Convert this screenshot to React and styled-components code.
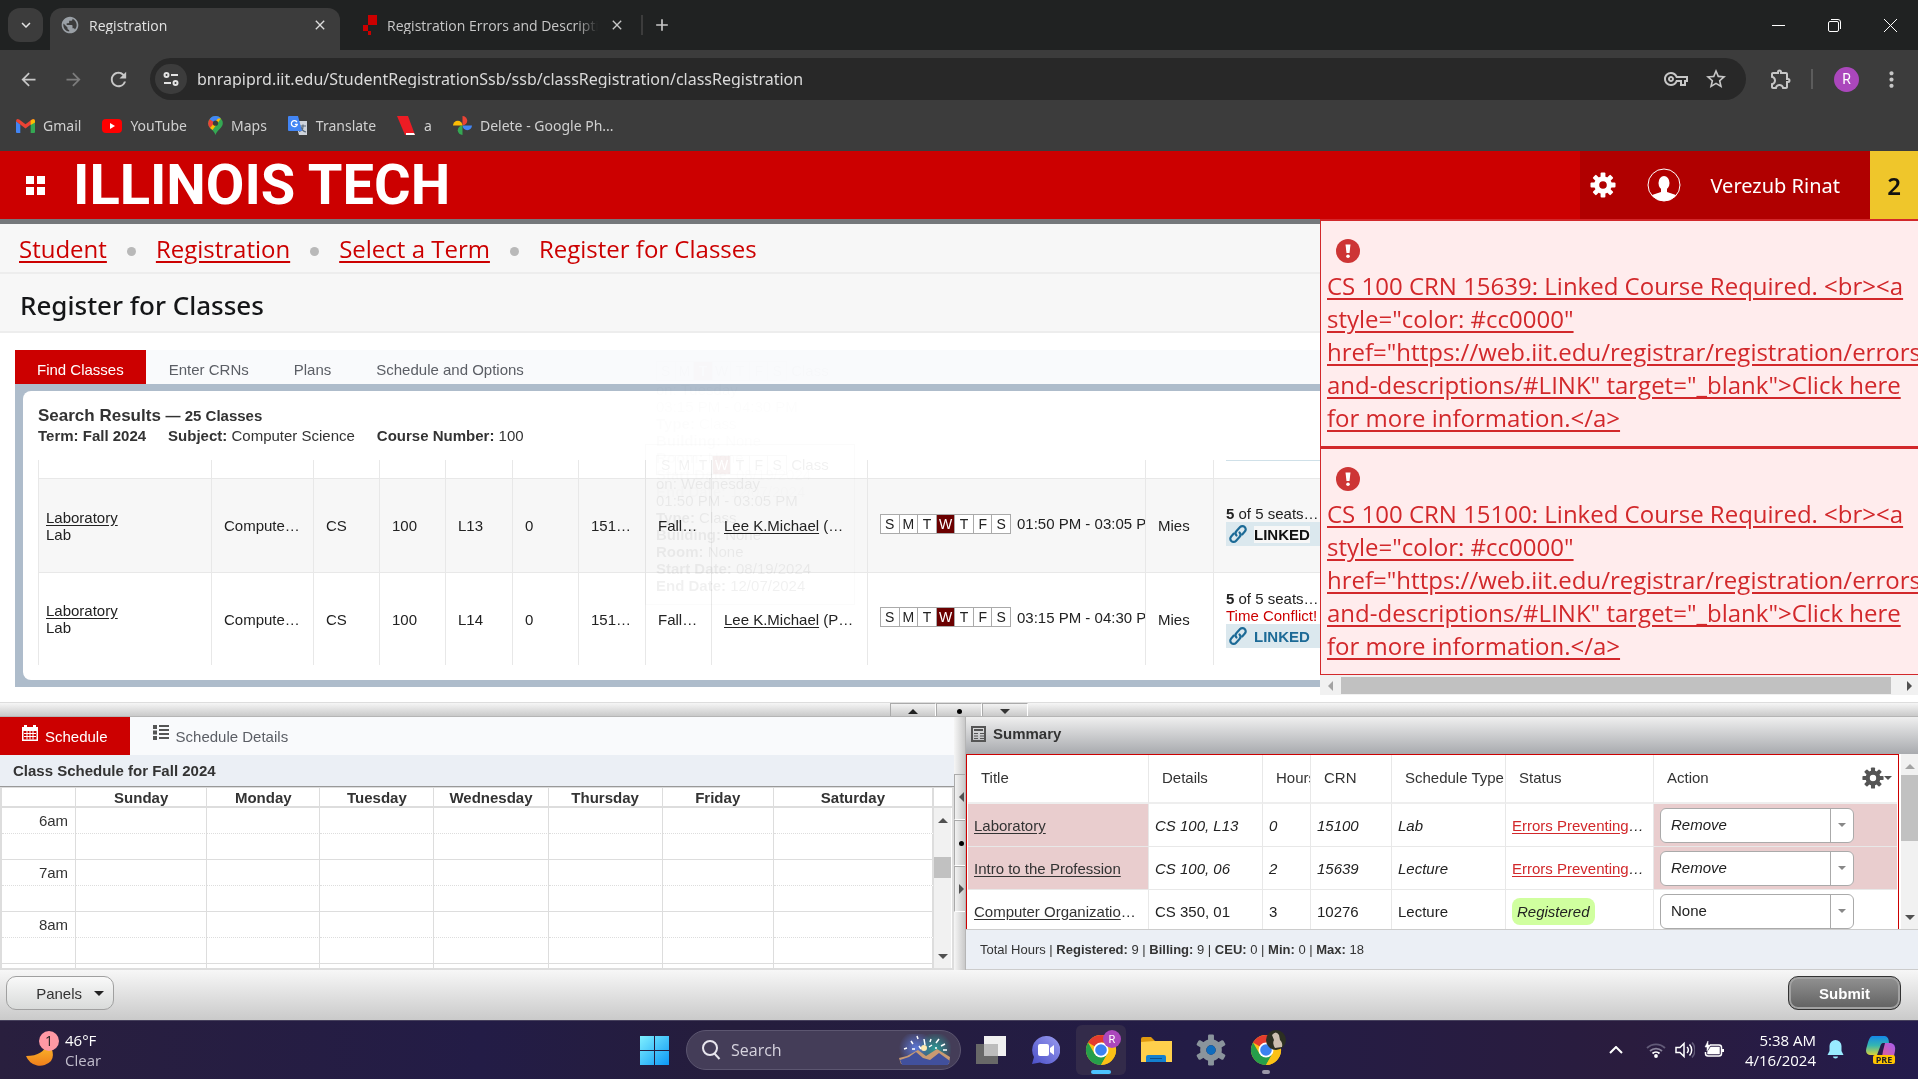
import React from "react";
import styled, { createGlobalStyle, css } from "styled-components";
import {
  MdAdd,
  MdArrowBack,
  MdArrowForward,
  MdClose,
  MdKeyboardArrowDown,
  MdMoreVert,
  MdOutlineExtension,
  MdOutlineVpnKey,
  MdPublic,
  MdRefresh,
  MdStarOutline,
} from "react-icons/md";

const ui = '"Noto Sans", "Open Sans", sans-serif';
const arial = '"Liberation Sans", Arial, sans-serif';
const noto = '"Noto Sans", "Open Sans", sans-serif';
const open = '"Open Sans", "Noto Sans", sans-serif';
const red = "#cc0000";

const GlobalStyle = createGlobalStyle`
  * { box-sizing: border-box; }
  body { margin: 0; font-family: ${arial}; font-size: 15px; line-height: 17px; color: #333; background: #fff; }
  button, input, select { font: inherit; color: inherit; margin: 0; padding: 0; border: 0; background: none; }
  h1, h2, h3, p, ol { margin: 0; padding: 0; font-size: inherit; font-weight: inherit; list-style: none; }
  svg { display: block; flex: none; }
`;

const Screen = styled.div`
  display: flex;
  flex-direction: column;
  min-height: 100vh;
  overflow: hidden;
`;

/* ---------- Browser frame ---------- */

const TabStrip = styled.div`
  display: flex;
  align-items: center;
  height: 50px;
  padding-left: 8px;
  background: #202222;
  color: #e3e3e3;
  font-family: ${open};
  font-size: 14px;
`;
const TabSearch = styled.button`
  display: grid;
  place-items: center;
  width: 35px;
  height: 34px;
  margin-right: 7px;
  border-radius: 12px;
  background: #3c3c3c;
`;
const BrowserTab = styled.div`
  display: flex;
  align-items: center;
  align-self: flex-end;
  height: 42px;
  width: ${(p) => p.$width}px;
  padding: ${(p) => (p.$active ? "0 10px 8px" : "0 10px 8px 22px")};
  gap: 9px;
  border-radius: 12px 12px 0 0;
  background: ${(p) => (p.$active ? "#3c3c3c" : "transparent")};
  color: ${(p) => (p.$active ? "#e3e3e3" : "#c7c7c7")};
`;
const Globe = styled(MdPublic)`
  color: #9aa0a6;
`;
const TabLabel = styled.span`
  flex: 1;
  overflow: hidden;
  white-space: nowrap;
  mask-image: linear-gradient(90deg, #000 90%, transparent);
`;
const StripRule = styled.span`
  width: 2px;
  height: 20px;
  margin: 0 7px 0 4px;
  background: #3c3c3c;
`;
const IconButton = styled.button`
  display: grid;
  place-items: center;
  width: ${(p) => p.$w || 24}px;
  height: 24px;
  color: ${(p) => p.$color || "#c7c7c7"};
`;
const WindowButtons = styled.div`
  display: flex;
  margin-left: auto;
`;
const Toolbar = styled.div`
  display: flex;
  align-items: center;
  height: 58px;
  padding: 0 11px 0 8px;
  background: #3c3c3c;
`;
const NavButtons = styled.div`
  display: flex;
  gap: 5px;
  margin-right: 12px;
`;
const AddressBar = styled.label`
  display: flex;
  align-items: center;
  flex: 1;
  height: 42px;
  padding: 0 18px 0 5px;
  gap: 10px;
  border-radius: 21px;
  background: #282828;
  font-family: ${ui};
  font-size: 16px;
  color: #dadada;
`;
const SiteInfo = styled.span`
  display: grid;
  place-items: center;
  width: 32px;
  height: 30px;
  border-radius: 16px;
  background: #3c3c3c;
`;
const AddressInput = styled.input`
  flex: 1;
  min-width: 0;
  outline: 0;
`;
const AddressIcons = styled.span`
  display: flex;
  gap: 16px;
  color: #c7c7c7;
`;
const ToolbarEnd = styled.div`
  display: flex;
  align-items: center;
  gap: 10px;
  margin-left: 15px;
`;
const ToolbarRule = styled.span`
  width: 2px;
  height: 20px;
  background: #5c5c5c;
`;
const Profile = styled.button`
  width: 25px;
  height: 25px;
  margin: 0 6px 0 11px;
  border-radius: 50%;
  background: #ab47bc;
  color: #fff;
  font-family: Roboto, sans-serif;
  font-size: 14px;
`;
const Bookmarks = styled.nav`
  display: flex;
  align-items: center;
  height: 43px;
  padding: 0 16px 8px;
  gap: 21px;
  background: #3c3c3c;
  font-family: ${ui};
  font-size: 14px;
`;
const Bookmark = styled.a`
  display: flex;
  align-items: center;
  gap: 8px;
  color: #d0d0d0;
  text-decoration: none;
`;

/* ---------- Application header ---------- */

const Header = styled.header`
  display: flex;
  align-items: center;
  height: 68px;
  padding-left: 26px;
  background: ${red};
  color: #fff;
`;
const MenuButton = styled.button`
  display: grid;
  grid-template-columns: 8px 8px;
  gap: 3px;
  margin-right: 28px;
  span { height: 8px; background: #fff; }
`;
const Wordmark = styled.a`
  color: #fff;
  text-decoration: none;
  font-family: Roboto, "Liberation Sans", sans-serif;
  font-size: 56px;
  font-weight: 700;
  line-height: 68px;
  white-space: nowrap;
`;
const UserArea = styled.div`
  display: flex;
  align-items: center;
  height: 68px;
  margin-left: auto;
  padding: 0 30px 0 10px;
  background: #b00000;
  font-family: ${noto};
  font-size: 20px;
  button { display: flex; align-items: center; color: #fff; }
`;
const UserButton = styled.button`
  gap: 30px;
  margin-left: 31px;
`;
const AlertCount = styled.button`
  width: 48px;
  height: 68px;
  background: #efc62b;
  color: #111;
  font-family: ${noto};
  font-size: 24px;
  font-weight: 600;
`;
const Content = styled.main`
  position: relative;
  display: flex;
  flex-direction: column;
  border-top: 5px solid #75787b;
`;
const Crumbs = styled.ol`
  display: flex;
  align-items: center;
  height: 50px;
  padding-left: 19px;
  border-bottom: 2px solid #ededed;
  background: #f7f7f7;
  color: ${red};
  font-family: ${open};
  font-size: 24px;
  li { display: flex; align-items: center; }
  li + li::before { content: ""; width: 9px; height: 9px; margin: 6px 20px 0; border-radius: 50%; background: #b9b9b9; }
  a { color: inherit; text-underline-offset: 3px; }
`;
const PageTitle = styled.h1`
  height: 59px;
  padding-left: 20px;
  border-bottom: 2px solid #ededed;
  background: #f7f7f7;
  color: #151618;
  font-family: ${noto};
  font-size: 26px;
  font-weight: 500;
  line-height: 62px;
`;
const Section = styled.section`
  margin: 17px 15px 15px;
`;
const Tabs = styled.div`
  display: flex;
  gap: 1px;
  background: #f9fafc;
`;
const Tab = styled.button`
  display: flex;
  align-items: ${(p) => (p.$tall ? "flex-start" : "center")};
  gap: 7px;
  height: ${(p) => (p.$tall ? 38 : 34)}px;
  padding: ${(p) => (p.$tall ? "8px 22px 0" : "4px 22px 0")};
  background: ${(p) => (p.$active ? red : "transparent")};
  color: ${(p) => (p.$active ? "#fff" : "#5b5e65")};
  span { padding-top: ${(p) => (p.$tall ? 3 : 0)}px; }
`;
const ResultsFrame = styled.div`
  padding: 7px 8px;
  background: #aebccb;
`;
const Results = styled.div`
  padding: 15px 15px;
  border-radius: 8px;
  background: #fff;
  line-height: 20px;
`;
const ResultsTitle = styled.h2`
  font-size: 17px;
  font-weight: 700;
  small { font-size: 15px; }
`;
const Criteria = styled.p`
  display: flex;
  gap: 22px;
  margin-bottom: 14px;
`;
const ResultTable = styled.table`
  width: 100%;
  table-layout: fixed;
  border-spacing: 0;
  line-height: 17px;
  color: #222;
  td {
    padding: 0 12px;
    border-left: 1px solid #e8e8e8;
    border-bottom: 1px solid #e8e8e8;
    overflow: hidden;
    white-space: nowrap;
  }
  td:first-child { padding-left: 7px; }
  tr:last-child td { border-bottom: 0; }
  a { color: inherit; text-underline-offset: 2px; }
`;
const ResultRow = styled.tr`
  height: ${(p) => p.$height}px;
  background: ${(p) => (p.$shaded ? "#f7f7f7" : "#fff")};
  td:last-child { vertical-align: ${(p) => (p.$cut ? "top" : "middle")}; }
`;
const Meeting = styled.div`
  display: flex;
  align-items: center;
  gap: 6px;
  margin: 0 -12px 4px 0;
  overflow: hidden;
`;
const Days = styled.span`
  display: inline-flex;
  flex: none;
  width: 131px;
  border: 1px solid #aaa;
  background: #fff;
`;
const Day = styled.span`
  flex: 1;
  height: 18px;
  line-height: 18px;
  text-align: center;
  font-size: 14px;
  border-left: ${(p) => (p.$first ? 0 : "1px solid #aaa")};
  background: ${(p) => (p.$on ? "#6b0000" : "#fff")};
  color: ${(p) => (p.$on ? "#fff" : "#222")};
`;
const Conflict = styled.div`
  color: ${red};
`;
const Linked = styled.div`
  display: flex;
  align-items: center;
  gap: 6px;
  width: 120px;
  height: 24px;
  padding-left: 2px;
  background: #dbe8ee;
  font-weight: 700;
  color: #1c6a96;
  span { ${(p) => p.$marked && css`background: #f7f7f7; color: #111;`} }
`;
const LinkedEdge = styled.div`
  height: 1px;
  background: #cfe0e8;
`;
const Tooltip = styled.div`
  position: absolute;
  left: 645px;
  top: ${(p) => p.$top}px;
  width: 210px;
  padding: 10px;
  border: 1px solid #bbb;
  background: #fff;
  color: #000;
  opacity: ${(p) => p.$opacity};
  pointer-events: none;
  mix-blend-mode: multiply;
`;

/* ---------- Notifications ---------- */

const Notifications = styled.aside`
  position: absolute;
  top: -5px;
  right: 0;
  width: 598px;
  overflow: hidden;
`;
const Notice = styled.div`
  height: 228px;
  padding: 18px 6px 0;
  border: solid #d2282b;
  border-width: 2px 0 1px 1px;
  background: #ffeced;
  font-family: ${open};
  font-size: 24px;
  line-height: 33px;
  a { display: block; margin-top: 6px; color: #d2282b; text-underline-offset: 3px; }
  svg { margin-left: 9px; }
`;
const ScrollRow = styled.div`
  display: flex;
  align-items: center;
  justify-content: space-between;
  height: 20px;
  padding: 2px 6px 1px 8px;
  background: #f1f1f1;
`;
const ScrollThumb = styled.span`
  width: ${(p) => p.$w || "100%"};
  height: ${(p) => p.$h}px;
  margin: ${(p) => p.$m || 0};
  background: #c1c1c1;
`;
const Arrow = styled.span`
  flex: none;
  width: 0;
  height: 0;
  border: ${(p) => p.$size || 5}px solid transparent;
  ${(p) => p.$dir === "up" && css`border-top: 0; border-bottom-color: ${p.$color || "#505050"};`}
  ${(p) => p.$dir === "down" && css`border-bottom: 0; border-top-color: ${p.$color || "#505050"};`}
  ${(p) => p.$dir === "left" && css`border-left: 0; border-right-color: ${p.$color || "#505050"};`}
  ${(p) => p.$dir === "right" && css`border-right: 0; border-left-color: ${p.$color || "#505050"};`}
`;

/* ---------- Splitters ---------- */

const Splitter = styled.div`
  display: flex;
  justify-content: center;
  height: 15px;
  border-top: 1px solid #ddd;
  border-bottom: 1px solid #b5b5b5;
  background: linear-gradient(#f6f6f6, #c9c9c9);
`;
const SideSplitter = styled.div`
  display: flex;
  flex-direction: column;
  padding-top: 57px;
  border-right: 1px solid #b5b5b5;
  background: linear-gradient(90deg, #f6f6f6, #c9c9c9);
`;
const SplitButton = styled.button`
  display: flex;
  align-items: center;
  justify-content: center;
  width: ${(p) => (p.$side ? 11 : 46)}px;
  height: ${(p) => (p.$side ? 46 : 13)}px;
  padding: ${(p) => (p.$side ? "0 0 0 3px" : "3px 0 0")};
  border: 1px solid #aaa;
  border-width: ${(p) => (p.$side ? "1px 0 1px 1px" : "1px 1px 0 1px")};
  border-right-color: #fff;
  border-bottom-color: #fff;
`;
const Dot = styled.span`
  width: 5px;
  height: 5px;
  border-radius: 50%;
  background: #000;
`;

/* ---------- Lower panels ---------- */

const Lower = styled.div`
  display: grid;
  grid-template-columns: 954fr 12px 952fr;
  flex: 1;
`;
const Panel = styled.section`
  display: flex;
  flex-direction: column;
  min-width: 0;
`;
const ScheduleTitle = styled.h2`
  height: 32px;
  padding: 0 13px;
  border-bottom: 1px solid #999;
  background: #ebeff5;
  font-weight: 700;
  line-height: 32px;
`;
const Calendar = styled.div`
  display: flex;
  flex: none;
  height: 183px;
  overflow: hidden;
  border: 2px solid #ddd;
  border-top-width: 1px;
`;
const CalendarTable = styled.table`
  flex: 1;
  min-width: 0;
  align-self: flex-start;
  table-layout: fixed;
  border-spacing: 0;
  th { height: 20px; padding: 0; border-right: 1px solid #ddd; border-bottom: 2px solid #ddd; font-weight: 700; }
  td { height: 26px; padding: 0 7px 0 0; border-right: 1px solid #ddd; border-bottom: 1px solid #ddd; text-align: right; }
  th:last-child, td:last-child { border-right: 2px solid #ddd; }
`;
const HalfHour = styled.tr`
  td { border-bottom-style: dotted; }
`;
const ScrollColumn = styled.div`
  display: flex;
  flex-direction: column;
  width: 18px;
`;
const ScrollCorner = styled.div`
  height: 20px;
  border-bottom: 2px solid #ddd;
`;
const ScrollTrack = styled.div`
  display: flex;
  flex-direction: column;
  align-items: center;
  flex: ${(p) => (p.$grow ? 1 : "none")};
  width: 17px;
  padding: 10px 0 9px;
  background: #f1f1f1;
  > :last-child { margin-top: auto; }
`;
const SummaryHeader = styled.h2`
  display: flex;
  align-items: center;
  gap: 7px;
  height: 37px;
  padding: 0 5px 4px;
  background: linear-gradient(#efefef, #a8aaae);
  font-weight: 700;
`;
const SummaryScroll = styled.div`
  display: flex;
  height: 175px;
  overflow: hidden;
`;
const SummaryBox = styled.div`
  flex: 1;
  min-width: 0;
  margin-right: 2px;
  padding: 0 1px;
  border: solid ${red};
  border-width: 1px 1px 0;
`;
const SummaryTable = styled.table`
  width: 100%;
  table-layout: fixed;
  border-spacing: 0;
  th { height: 49px; padding: 0 0 3px 13px; border-bottom: 2px solid #eee; font-weight: 400; text-align: left; overflow: hidden; white-space: nowrap; }
  td { height: 43px; padding: 0 6px; border-bottom: 1px solid #e8e8e8; color: #222; overflow: hidden; white-space: nowrap; text-overflow: ellipsis; }
  th + th, td + td { border-left: 1px solid #e8e8e8; }
  a { text-underline-offset: 2px; }
`;
const SummaryRow = styled.tr`
  font-style: ${(p) => (p.$error ? "italic" : "normal")};
  td:first-child, td:last-child { background: ${(p) => (p.$error ? "#e9cdce" : "#fff")}; }
  td:first-child { font-style: normal; }
`;
const TitleLink = styled.a`
  color: #333;
`;
const ErrorLink = styled.a`
  color: #d2282b;
  font-style: normal;
`;
const ActionHead = styled.div`
  display: flex;
  align-items: center;
  justify-content: space-between;
  height: 24px;
  padding-right: 5px;
  button { display: flex; align-items: center; padding-top: 2px; }
`;
const Registered = styled.span`
  display: inline-block;
  padding: 5px 5px;
  border-radius: 8px;
  background: #d0ff9f;
  font-style: italic;
`;
const SelectBox = styled.label`
  display: flex;
  align-items: center;
  width: 194px;
  height: 35px;
  padding-right: 7px;
  border: 1px solid #aaa;
  border-radius: 6px;
  background: #fff;
  select {
    width: 172px;
    height: 33px;
    margin-right: 7px;
    padding: 0 0 2px 10px;
    border-right: 1px solid #aaa;
    appearance: none;
    outline: 0;
    font-style: inherit;
  }
`;
const Totals = styled.p`
  flex: 1;
  padding: 11px 14px 0;
  border: solid #ccc;
  border-width: 1px 0;
  background: #ebeff5;
  font-size: 13px;
`;
const Footer = styled.footer`
  display: flex;
  align-items: center;
  justify-content: space-between;
  height: 50px;
  padding: 0 17px 4px 6px;
  background: linear-gradient(#f7f7f7, #cacaca);
`;
const PanelsButton = styled.button`
  display: flex;
  align-items: center;
  justify-content: flex-end;
  gap: 12px;
  width: 108px;
  height: 34px;
  padding-right: 9px;
  border: 1px solid #a0a0a0;
  border-radius: 10px;
  background: linear-gradient(#f9f9f9, #d9dbda);
`;
const SubmitButton = styled.button`
  width: 113px;
  height: 34px;
  border: 1px solid #333;
  border-radius: 10px;
  background: linear-gradient(#929292, #616161);
  box-shadow: inset 0 0 0 2px #a2a2a2;
  color: #fff;
  font-weight: 700;
`;

/* ---------- Taskbar ---------- */

const Taskbar = styled.div`
  display: grid;
  grid-template-columns: 640px 1fr auto;
  align-items: center;
  height: 59px;
  border-top: 1px solid #46405c;
  background: linear-gradient(90deg, #291f3e, #231c46 25%, #251d3c 38%, #231c46 62%, #2a1c3e 85%, #241b4c);
  color: #fff;
  font-family: ${open};
  font-size: 15px;
  line-height: 20px;
`;
const Weather = styled.div`
  display: flex;
  align-items: center;
  gap: 6px;
  padding-left: 26px;
  p { color: #fff; }
  p + p { color: #c0bccb; }
`;
const TaskApps = styled.div`
  display: flex;
  align-items: center;
`;
const TaskSearch = styled.label`
  display: flex;
  align-items: center;
  width: 275px;
  height: 40px;
  margin: 0 5px 0 17px;
  padding: 0 9px 0 14px;
  gap: 10px;
  border: 1px solid #5c5670;
  border-radius: 20px;
  background: #443d58;
  input { flex: 1; min-width: 0; outline: 0; font-size: 16px; }
  input::placeholder { color: #d6d3de; opacity: 1; }
`;
const TaskApp = styled.button`
  position: relative;
  display: grid;
  place-items: center;
  width: 50px;
  height: 50px;
  margin-right: 5px;
  border-radius: 6px;
  background: ${(p) => (p.$active ? "#332b4a" : "transparent")};
  &::after {
    content: "";
    position: absolute;
    bottom: 1px;
    width: ${(p) => (p.$active ? 20 : 8)}px;
    height: 4px;
    border-radius: 2px;
    background: ${(p) => (p.$active ? "#4cc2ff" : p.$open ? "#9a96a8" : "transparent")};
  }
`;
const Tray = styled.div`
  display: flex;
  align-items: center;
  padding-right: 22px;
  text-align: right;
`;
const TrayIcons = styled.div`
  display: flex;
  align-items: center;
  gap: 9px;
  margin-right: 21px;
  > :first-child { margin-right: 14px; }
`;
const Bell = styled.svg`
  margin: 0 22px 0 11px;
`;

/* ---------- Drawings ---------- */

const Gear = ({ size, color, hole, teeth = 8 }) => (
  <svg width={size} height={size} viewBox="-13 -13 26 26">
    {Array.from({ length: teeth }, (_, i) => (
      <rect key={i} x="-2.4" y="-12.5" width="4.8" height="8" rx="1" fill={color} transform={`rotate(${(i * 360) / teeth})`} />
    ))}
    <circle r="6.3" fill="none" stroke={color} strokeWidth="5" />
    {hole && <circle r="3.8" fill={hole} />}
  </svg>
);

const ChromeLogo = ({ badge }) => (
  <svg width="40" height="40" viewBox="-20 -20 40 40">
    <circle r="15" fill="#fbc116" />
    <path d="M0 0 -13 -7.5A15 15 0 0 1 13 -7.5Z" fill="#e33b2e" />
    <path d="M-13 -7.5A15 15 0 0 0 0 15L6.5 3.7 -6.5 3.7Z" fill="#269e4b" />
    <path d="M13 -7.5H0V0L6.5 3.7 0 15A15 15 0 0 0 13 -7.5Z" fill="#fbc116" />
    <circle r="7.5" fill="#fff" />
    <circle r="5.8" fill="#3b82f1" />
    {badge === "R" ? (
      <>
        <circle cx="11" cy="-11" r="9" fill="#ab47bc" />
        <text x="11" y="-7" textAnchor="middle" fontSize="11" fontFamily="Roboto, sans-serif" fill="#fff">R</text>
      </>
    ) : (
      <>
        <circle cx="10" cy="-10" r="10" fill="#2c2f22" />
        <path d="M6 -15q4 -5 7 0l1 5q3 3 2 7l-7 1q-3 -5 -1 -8z" fill="#cdbfb0" />
      </>
    )}
  </svg>
);

const Chain = () => (
  <svg width="20" height="20" viewBox="0 0 20 20" fill="none" stroke="#1c6a96" strokeWidth="2.2" strokeLinecap="round">
    <path d="M8.5 11.5a3.3 3.3 0 0 1 0-4.6l3.6-3.8a3.2 3.2 0 0 1 4.7 4.5l-2.6 2.8" />
    <path d="M11.5 8.5a3.3 3.3 0 0 1 0 4.6l-3.6 3.8a3.2 3.2 0 0 1-4.7-4.5l2.6-2.8" />
  </svg>
);

const GmailIcon = () => (
  <svg width="19" height="14" viewBox="0 0 19 14">
    <path d="M0 2v11a1 1 0 0 0 1 1h3.3V5.5z" fill="#4285f4" />
    <path d="M19 2v11a1 1 0 0 1-1 1h-3.300V5.500z" fill="#34a853" />
    <path d="M0 2.200Q.4-1 3.200.6L9.500 5.300 15.800.6Q18.600-1 19 2.200L9.500 9.500z" fill="#ea4335" />
    <path d="M14.700 1.400Q18.800-1.300 19 2.200V3.500L14.700 6z" fill="#fbbc04" />
  </svg>
);
const YouTubeIcon = () => (
  <svg width="20" height="14" viewBox="0 0 20 14">
    <rect width="20" height="14" rx="4" fill="#f00" />
    <path d="M8 4v6l5-3z" fill="#fff" />
  </svg>
);
const MapsIcon = () => (
  <svg width="15" height="19" viewBox="0 0 15 19">
    <path d="M7.500 0A7.300 7.300 0 0 0 .2 7.300C.2 12 6 14 7.500 19 9 14 14.800 12 14.800 7.300A7.300 7.300 0 0 0 7.500 0z" fill="#34a853" />
    <path d="M7.500 0A7.300 7.300 0 0 0 1.500 3.300L7.500 8l5-6.200A7 7 0 0 0 7.500 0z" fill="#4285f4" />
    <path d="M1.500 3.300A7.300 7.300 0 0 0 2 12L7.500 7z" fill="#ea4335" />
    <path d="M2 12l8-9.500 3-.1L4.500 14z" fill="#fbbc04" />
    <circle cx="7.500" cy="7.200" r="2.600" fill="#3c3c3c" />
  </svg>
);
const TranslateIcon = () => (
  <svg width="20" height="19" viewBox="0 0 20 19">
    <path d="M7 5h12v14H11z" fill="#cfd3da" />
    <path d="M12 10h6M15 8.500v2q0 4-4 5M13 11q1 4 5 5" fill="none" stroke="#5a6b7c" strokeWidth="1.200" />
    <path d="M1 0h9l4 15H1a1 1 0 0 1-1-1V1a1 1 0 0 1 1-1z" fill="#4285f4" />
    <path d="M9 6.200A3 3 0 1 0 9.300 8.300H6.800" fill="none" stroke="#fff" strokeWidth="1.300" />
  </svg>
);
const PhotosIcon = () => (
  <svg width="19" height="19" viewBox="0 0 19 19">
    <path d="M9.500 0a4.700 4.700 0 0 1 0 9.500z" fill="#ea4335" />
    <path d="M19 9.500a4.700 4.700 0 0 1-9.500 0z" fill="#4285f4" />
    <path d="M9.500 19a4.700 4.700 0 0 1 0-9.500z" fill="#34a853" />
    <path d="M0 9.500a4.700 4.700 0 0 1 9.500 0z" fill="#fbbc04" />
  </svg>
);

/* ---------- Data ---------- */

const DAY_LETTERS = ["S", "M", "T", "W", "T", "F", "S"];
const RESULTS = [
  { section: "L13", teacher: "Lee K.Michael", role: "(…", time: "01:50 PM - 03:05 PM", height: 94, marked: true },
  { section: "L14", teacher: "Lee K.Michael", role: "(P…", time: "03:15 PM - 04:30 PM", height: 92, conflict: true },
];
const RESULT_COLUMNS = [173, 102, 66, 66, 67, 66, 67, 66, 156, 278, 68];
const SUMMARY_COLUMNS = [180, 114, 48, 81, 114, 148];
const SUMMARY = [
  { title: "Laboratory", details: "CS 100, L13", hours: 0, crn: 15100, type: "Lab", action: "Remove", error: true },
  { title: "Intro to the Profession", details: "CS 100, 06", hours: 2, crn: 15639, type: "Lecture", action: "Remove", error: true },
  { title: "Computer Organizatio", cut: "…", details: "CS 350, 01", hours: 3, crn: 10276, type: "Lecture", action: "None" },
];
const WEEK = [
  ["Sunday", 131],
  ["Monday", 113],
  ["Tuesday", 114],
  ["Wednesday", 114],
  ["Thursday", 114],
  ["Friday", 111],
  ["Saturday", 160],
];

const DayStrip = ({ on }) => (
  <Days>
    {DAY_LETTERS.map((d, i) => (
      <Day key={i} $first={i === 0} $on={i === on}>{d}</Day>
    ))}
  </Days>
);

const MeetingTooltip = ({ top, opacity, on, day, time }) => (
  <Tooltip $top={top} $opacity={opacity} aria-hidden="true">
    <DayStrip on={on} /> Class
    <div>on: {day}</div>
    <div>{time}</div>
    <div><b>Type:</b> Class</div>
    <div><b>Building:</b> None</div>
    <div><b>Room:</b> None</div>
    <div><b>Start Date:</b> 08/19/2024</div>
    <div><b>End Date:</b> 12/07/2024</div>
  </Tooltip>
);

const Browser = () => (
  <>
    <TabStrip>
      <TabSearch aria-label="Search tabs"><MdKeyboardArrowDown size={18} /></TabSearch>
      <BrowserTab $active $width={290}>
        <Globe size={20} />
        <TabLabel>Registration</TabLabel>
        <IconButton $w={20} $color="#dcdcdc" aria-label="Close Registration"><MdClose size={16} /></IconButton>
      </BrowserTab>
      <BrowserTab $width={297}>
        <svg width="16" height="20" viewBox="-4 0 14 20">
          <path d="M1 0h9v10H1zM-4 10h5v6h-5zM1 16h3v4H1z" fill="#cc0000" />
        </svg>
        <TabLabel>Registration Errors and Descriptions</TabLabel>
        <IconButton $w={20} aria-label="Close Registration Errors"><MdClose size={16} /></IconButton>
      </BrowserTab>
      <StripRule />
      <IconButton aria-label="New tab"><MdAdd size={20} /></IconButton>
      <WindowButtons>
        <IconButton $w={56} $color="#fff" aria-label="Minimize">
          <svg width="13" height="13" stroke="currentColor"><path d="M0 6.500h13" /></svg>
        </IconButton>
        <IconButton $w={56} $color="#fff" aria-label="Restore">
          <svg width="13" height="13" fill="none" stroke="currentColor"><rect x=".5" y="2.500" width="10" height="10" rx="1.500" /><path d="M3 .5h7a2.500 2.500 0 0 1 2.500 2.500v7" /></svg>
        </IconButton>
        <IconButton $w={56} $color="#fff" aria-label="Close window">
          <svg width="13" height="13" stroke="currentColor"><path d="M0 0l13 13M13 0L0 13" /></svg>
        </IconButton>
      </WindowButtons>
    </TabStrip>
    <Toolbar>
      <NavButtons>
        <IconButton $w={40} aria-label="Back"><MdArrowBack size={21} /></IconButton>
        <IconButton $w={40} $color="#7c7c7c" aria-label="Forward"><MdArrowForward size={21} /></IconButton>
        <IconButton $w={40} aria-label="Reload"><MdRefresh size={23} /></IconButton>
      </NavButtons>
      <AddressBar>
        <SiteInfo>
          <svg width="16" height="14" viewBox="0 0 16 14" fill="none" stroke="#e3e3e3" strokeWidth="2">
            <circle cx="3.500" cy="3" r="2" /><path d="M8 3h7M1 11h7" /><circle cx="12.500" cy="11" r="2" />
          </svg>
        </SiteInfo>
        <AddressInput aria-label="Address" readOnly value="bnrapiprd.iit.edu/StudentRegistrationSsb/ssb/classRegistration/classRegistration" />
        <AddressIcons>
          <MdOutlineVpnKey size={24} />
          <MdStarOutline size={24} />
        </AddressIcons>
      </AddressBar>
      <ToolbarEnd>
        <IconButton $w={40} aria-label="Extensions"><MdOutlineExtension size={24} /></IconButton>
        <ToolbarRule />
        <Profile>R</Profile>
        <IconButton $w={32} aria-label="Menu"><MdMoreVert size={25} /></IconButton>
      </ToolbarEnd>
    </Toolbar>
    <Bookmarks>
      <Bookmark href="#gmail"><GmailIcon />Gmail</Bookmark>
      <Bookmark href="#youtube"><YouTubeIcon />YouTube</Bookmark>
      <Bookmark href="#maps"><MapsIcon />Maps</Bookmark>
      <Bookmark href="#translate"><TranslateIcon />Translate</Bookmark>
      <Bookmark href="#a">
        <svg width="19" height="19"><path d="M0 0h11l7 19H8z" fill="#ed1c24" /><path d="M9 17h8l1 2h-9z" fill="#fff" /></svg>a
      </Bookmark>
      <Bookmark href="#delete"><PhotosIcon />Delete - Google Ph...</Bookmark>
    </Bookmarks>
  </>
);

const noticeText = (crn) =>
  `CS 100 CRN ${crn}: Linked Course Required. <br><a style="color: #cc0000" href="https://web.iit.edu/registrar/registration/errors-and-descriptions/#LINK" target="_blank">Click here for more information.</a>`;

const ErrorNotice = ({ crn }) => (
  <Notice>
    <svg width="24" height="24" viewBox="0 0 24 24">
      <circle cx="12" cy="12" r="12" fill="#cd3535" />
      <path d="M9.500 5.500h5l-1 8.500h-3z" fill="#fff" />
      <circle cx="12" cy="17.300" r="1.800" fill="#fff" />
    </svg>
    <a href="#error">{noticeText(crn)}</a>
  </Notice>
);

const SearchResults = () => (
  <Section>
    <Tabs>
      <Tab $active>Find Classes</Tab>
      <Tab>Enter CRNs</Tab>
      <Tab>Plans</Tab>
      <Tab>Schedule and Options</Tab>
    </Tabs>
    <ResultsFrame>
      <Results>
        <ResultsTitle>Search Results <small>— 25 Classes</small></ResultsTitle>
        <Criteria>
          <b>Term: Fall 2024</b>
          <span><b>Subject:</b> Computer Science</span>
          <span><b>Course Number:</b> 100</span>
        </Criteria>
        <ResultTable>
          <colgroup>
            {RESULT_COLUMNS.map((w, i) => <col key={i} width={w} />)}
            <col />
          </colgroup>
          <tbody>
            <ResultRow $height={19} $cut>
              {RESULT_COLUMNS.map((_, i) => <td key={i} />)}
              <td><LinkedEdge /></td>
            </ResultRow>
            {RESULTS.map((r) => (
              <ResultRow key={r.section} $height={r.height} $shaded={r.marked}>
                <td><a href="#course">Laboratory</a><br />Lab</td>
                <td>Compute…</td>
                <td>CS</td>
                <td>100</td>
                <td>{r.section}</td>
                <td>0</td>
                <td>151…</td>
                <td>Fall…</td>
                <td><a href="#teacher">{r.teacher}</a> {r.role}</td>
                <td><Meeting><DayStrip on={3} />{r.time}</Meeting></td>
                <td>Mies</td>
                <td>
                  <b>5</b> of 5 seats…
                  {r.conflict && <Conflict>Time Conflict!</Conflict>}
                  <Linked $marked={r.marked}><Chain /><span>LINKED</span></Linked>
                </td>
              </ResultRow>
            ))}
          </tbody>
        </ResultTable>
      </Results>
    </ResultsFrame>
  </Section>
);

const Schedule = () => (
  <Panel>
    <Tabs>
      <Tab $active $tall>
        <svg width="16" height="16" viewBox="0 0 16 16">
          <path d="M0 2h2V0h3v2h6V0h3v2h2v14H0z" fill="#fff" />
          <path d="M1.500 6h13v8.500h-13z" fill="#cc0000" />
          <path d="M2 8.500h12M2 11.500h12M5 6v8.500M8 6v8.500M11 6v8.500" stroke="#fff" />
        </svg>
        <span>Schedule</span>
      </Tab>
      <Tab $tall>
        <svg width="16" height="15" stroke="#555" strokeWidth="2" fill="none">
          <path d="M0 2h4M0 7.500h4M0 13h4" strokeWidth="4" />
          <path d="M6 1h10M6 5h10M6 9h10M6 13h10" />
        </svg>
        <span>Schedule Details</span>
      </Tab>
    </Tabs>
    <ScheduleTitle>Class Schedule for Fall 2024</ScheduleTitle>
    <Calendar>
      <CalendarTable>
        <colgroup>
          <col width="74" />
          {WEEK.map(([d, w]) => <col key={d} width={w} />)}
        </colgroup>
        <thead>
          <tr>
            <th />
            {WEEK.map(([d]) => <th key={d}>{d}</th>)}
          </tr>
        </thead>
        <tbody>
          {["6am", "7am", "8am", ""].map((h) => (
            <React.Fragment key={h}>
              <HalfHour><td>{h}</td>{WEEK.map(([d]) => <td key={d} />)}</HalfHour>
              <tr><td />{WEEK.map(([d]) => <td key={d} />)}</tr>
            </React.Fragment>
          ))}
        </tbody>
      </CalendarTable>
      <ScrollColumn>
        <ScrollCorner />
        <ScrollTrack $grow>
          <Arrow $dir="up" />
          <ScrollThumb $h={21} $m="34px 0 0" />
          <Arrow $dir="down" />
        </ScrollTrack>
      </ScrollColumn>
    </Calendar>
  </Panel>
);

const Summary = () => (
  <Panel>
    <SummaryHeader>
      <svg width="15" height="16" viewBox="0 0 15 16" fill="none" stroke="#555">
        <path d="M1 1h13v14H1z" strokeWidth="2" />
        <path d="M3 4h9" strokeWidth="2" />
        <path d="M3 7.500h4M9 7.500h4M3 10h4M9 10h4M3 12.500h4M9 12.500h4" />
      </svg>
      Summary
    </SummaryHeader>
    <SummaryScroll>
      <SummaryBox>
        <SummaryTable>
          <colgroup>
            {SUMMARY_COLUMNS.map((w, i) => <col key={i} width={w} />)}
            <col />
          </colgroup>
          <thead>
            <tr>
              <th>Title</th><th>Details</th><th>Hours</th><th>CRN</th><th>Schedule Type</th><th>Status</th>
              <th>
                <ActionHead>
                  Action
                  <button aria-label="Columns"><Gear size={22} color="#555" /><Arrow $dir="down" $size={4} /></button>
                </ActionHead>
              </th>
            </tr>
          </thead>
          <tbody>
            {SUMMARY.map((r) => (
              <SummaryRow key={r.crn} $error={r.error}>
                <td><TitleLink href="#course">{r.title}</TitleLink>{r.cut}</td>
                <td>{r.details}</td>
                <td>{r.hours}</td>
                <td>{r.crn}</td>
                <td>{r.type}</td>
                <td>{r.error ? <><ErrorLink href="#status">Errors Preventing</ErrorLink>…</> : <Registered>Registered</Registered>}</td>
                <td>
                  <SelectBox>
                    <select aria-label={`Action for ${r.title}`} defaultValue={r.action}>
                      <option>{r.action}</option>
                    </select>
                    <Arrow $dir="down" $size={4} $color="#888" />
                  </SelectBox>
                </td>
              </SummaryRow>
            ))}
          </tbody>
        </SummaryTable>
      </SummaryBox>
      <ScrollTrack>
        <Arrow $dir="up" $color="#a3a3a3" />
        <ScrollThumb $h={66} $m="6px 0 0" />
        <Arrow $dir="down" />
      </ScrollTrack>
    </SummaryScroll>
    <Totals>
      Total Hours | <b>Registered:</b> 9 | <b>Billing:</b> 9 | <b>CEU:</b> 0 | <b>Min:</b> 0 | <b>Max:</b> 18
    </Totals>
  </Panel>
);

const Desktop = () => (
  <Taskbar>
    <Weather>
      <svg width="33" height="40" viewBox="0 0 33 40">
        <defs><linearGradient id="moon" x1="0" y1="0" x2="0" y2="1"><stop offset="0" stopColor="#fbc02d" /><stop offset="1" stopColor="#f07f1b" /></linearGradient></defs>
        <path d="M0 26Q18 26 22 12 30 24 25 31A15 15 0 0 1 0 26z" fill="url(#moon)" />
        <circle cx="23" cy="11" r="10" fill="#ff99a4" />
        <text x="23" y="16" textAnchor="middle" fontSize="14" fill="#222">1</text>
      </svg>
      <div><p>46°F</p><p>Clear</p></div>
    </Weather>
    <TaskApps>
      <svg width="29" height="29" viewBox="0 0 29 29">
        <defs><linearGradient id="win" x1="0" y1="0" x2="1" y2="1"><stop offset="0" stopColor="#7ff0ff" /><stop offset="1" stopColor="#0c98f5" /></linearGradient></defs>
        <path d="M0 0h14v14H0zM15 0h14v14H15zM0 15h14v14H0zM15 15h14v14H15z" fill="url(#win)" />
      </svg>
      <TaskSearch>
        <svg width="20" height="20" fill="none" stroke="#e8e6ee" strokeWidth="2"><circle cx="9" cy="8" r="7" /><path d="M13 13l5.500 6" /></svg>
        <input placeholder="Search" aria-label="Search" />
        <svg width="52" height="32" viewBox="0 0 52 32">
          <defs>
            <radialGradient id="glowL"><stop offset="0" stopColor="#5b78d8" /><stop offset="1" stopColor="#5b78d8" stopOpacity="0" /></radialGradient>
            <radialGradient id="glowR"><stop offset="0" stopColor="#2a9c98" /><stop offset="1" stopColor="#2a9c98" stopOpacity="0" /></radialGradient>
          </defs>
          <circle cx="17" cy="14" r="17" fill="url(#glowL)" />
          <circle cx="36" cy="15" r="17" fill="url(#glowR)" />
          <path d="M0 24L8 22 19 16 27 22 38 15 51 23 50 30 2 30z" fill="#c89a72" />
          <path d="M1 26L10 23 17 18 24 24 31 26 40 19 51 27 49 31H3z" fill="#41509c" />
          <path d="M5 15l3-1M12 7l2 3M18 2l1 3M25 5l1 6M32 5l-1 3M40 5l-3 4M46 10l-4 2M48 16h-4M20 12l2 3M30 13l3-2M36 14l2 0M13 15l3 0" stroke="#fff" strokeWidth="1.500" />
          <circle cx="25" cy="14" r="3" fill="#ffe9b0" />
        </svg>
      </TaskSearch>
      <TaskApp aria-label="Task view">
        <svg width="30" height="28"><path d="M0 8h22v20H0z" fill="#686868" /><path d="M8 0h22v20H8z" fill="#f0f0f0" /><path d="M8 8h14v12H8z" fill="#bcbcbc" /></svg>
      </TaskApp>
      <TaskApp aria-label="Chat">
        <svg width="28" height="28"><defs><linearGradient id="chat" x1="1" y1="0" x2="0" y2="1"><stop offset="0" stopColor="#9a9cf0" /><stop offset="1" stopColor="#4b50c8" /></linearGradient></defs>
          <path d="M14 0a14 14 0 1 1-6 26.500L0 28l2-7A14 14 0 0 1 14 0z" fill="url(#chat)" /><rect x="6" y="8" width="11" height="12" rx="2" fill="#fff" /><path d="M18 12l4-3v10l-4-3z" fill="#fff" /></svg>
      </TaskApp>
      <TaskApp $active aria-label="Chrome"><ChromeLogo badge="R" /></TaskApp>
      <TaskApp aria-label="File Explorer">
        <svg width="31" height="28"><path d="M0 3a2 2 0 0 1 2-2h8l4 4v6H0z" fill="#e09a0f" /><path d="M0 6l13-1h18v21H0z" fill="#ffd04c" /><path d="M5 26v-5a2 2 0 0 1 2-2h16a2 2 0 0 1 2 2v5z" fill="#1380d0" /><path d="M9 22.500h12" stroke="#0b4f8c" /></svg>
      </TaskApp>
      <TaskApp aria-label="Settings"><Gear size={32} color="#8a949c" hole="#0f6cbd" teeth={6} /></TaskApp>
      <TaskApp $open aria-label="Chrome, second profile"><ChromeLogo /></TaskApp>
    </TaskApps>
    <Tray>
      <TrayIcons>
        <svg width="14" height="8" fill="none" stroke="#fff" strokeWidth="2"><path d="M1 7l6-6 6 6" /></svg>
        <svg width="20" height="16" fill="none" stroke="#fff" strokeWidth="1.800">
          <path d="M1 6a13 13 0 0 1 18 0" stroke="#625b78" /><path d="M4 9a9 9 0 0 1 12 0" stroke="#8a849c" /><path d="M6.500 11.500a5 5 0 0 1 7 0" /><circle cx="10" cy="14" r="1" fill="#fff" />
        </svg>
        <svg width="20" height="18" fill="none" stroke="#fff" strokeWidth="1.500">
          <path d="M1 6.500h4l4-4v13l-4-4H1z" /><path d="M12 6a4 4 0 0 1 0 6M14.500 3.500a8 8 0 0 1 0 11" /><path d="M17 1.500a11 11 0 0 1 0 15" stroke="#625b78" />
        </svg>
        <svg width="20" height="18" fill="none" stroke="#fff" strokeWidth="1.500">
          <path d="M6 4h9a2.500 2.500 0 0 1 2.500 2.500v6A2.500 2.500 0 0 1 15 15H4a2.500 2.500 0 0 1-2.500-2.500V11" /><path d="M7 6.500h8v6H4V11z" fill="#fff" /><path d="M19 8v3" strokeWidth="2" /><path d="M4 0L1 6h2v4l3.500-6H4z" fill="#fff" strokeWidth=".5" />
        </svg>
      </TrayIcons>
      <div><p>5:38 AM</p><p>4/16/2024</p></div>
      <Bell width="17" height="20"><path d="M8.500 0A6 6 0 0 1 14.500 6v5l2 4H.5l2-4V6A6 6 0 0 1 8.500 0zM6 16.500h5a2.500 2 0 0 1-5 0z" fill="#99ebff" /></Bell>
      <svg width="30" height="29" viewBox="0 0 30 29">
        <defs>
          <linearGradient id="copA" x1="0" y1="0" x2="0" y2="1"><stop offset="0" stopColor="#1488e8" /><stop offset=".5" stopColor="#35b6b0" /><stop offset="1" stopColor="#d8d23a" /></linearGradient>
          <linearGradient id="copB" x1="1" y1="0" x2="0" y2="1"><stop offset="0" stopColor="#a45cf0" /><stop offset="1" stopColor="#f2607c" /></linearGradient>
        </defs>
        <path d="M6 0h13q4 1 4 7h-6q-2 0-3 4l-3 8H4q-6-1-3-9Q3 1 6 0z" fill="url(#copA)" />
        <path d="M19 7h6q5 1 4 8-1 8-6 10H12q4-1 5-10z" fill="url(#copB)" />
        <rect x="7" y="19" width="22" height="9" rx="2" fill="#ffc400" />
        <text x="18" y="27" textAnchor="middle" fontSize="9" fontWeight="700" fill="#222">PRE</text>
      </svg>
    </Tray>
  </Taskbar>
);

export default function App() {
  return (
    <Screen>
      <GlobalStyle />
      <Browser />
      <Header>
        <MenuButton aria-label="Menu"><span /><span /><span /><span /></MenuButton>
        <Wordmark href="#home">ILLINOIS TECH</Wordmark>
        <UserArea>
          <button aria-label="Settings"><Gear size={26} color="#fff" /></button>
          <UserButton>
            <svg width="34" height="34" viewBox="0 0 34 34">
              <clipPath id="avatar"><circle cx="17" cy="17" r="16" /></clipPath>
              <circle cx="17" cy="17" r="16" fill="none" stroke="#fff" />
              <g clipPath="url(#avatar)" fill="#fff"><ellipse cx="17" cy="15" rx="5.500" ry="7" /><path d="M14 19h6v5l9 3 3 8H2l3-8 9-3z" /></g>
            </svg>
            Verezub Rinat
          </UserButton>
        </UserArea>
        <AlertCount>2</AlertCount>
      </Header>
      <Content>
        <Crumbs>
          <li><a href="#student">Student</a></li>
          <li><a href="#registration">Registration</a></li>
          <li><a href="#term">Select a Term</a></li>
          <li>Register for Classes</li>
        </Crumbs>
        <PageTitle>Register for Classes</PageTitle>
        <SearchResults />
        <MeetingTooltip top={126} opacity={0.01} on={2} day="Tuesday" time="03:15 PM - 04:30 PM" />
        <MeetingTooltip top={220} opacity={0.06} on={3} day="Wednesday" time="01:50 PM - 03:05 PM" />
        <Notifications>
          <ErrorNotice crn="15639" />
          <ErrorNotice crn="15100" />
          <ScrollRow>
            <Arrow $dir="left" $color="#a3a3a3" />
            <ScrollThumb $w="550px" $h={17} $m="0 auto 0 8px" />
            <Arrow $dir="right" />
          </ScrollRow>
        </Notifications>
      </Content>
      <Splitter>
        <SplitButton aria-label="Collapse up"><Arrow $dir="up" $color="#222" /></SplitButton>
        <SplitButton aria-label="Reset"><Dot /></SplitButton>
        <SplitButton aria-label="Collapse down"><Arrow $dir="down" $color="#333" /></SplitButton>
      </Splitter>
      <Lower>
        <Schedule />
        <SideSplitter>
          <SplitButton $side aria-label="Collapse left"><Arrow $dir="left" /></SplitButton>
          <SplitButton $side aria-label="Reset columns"><Dot /></SplitButton>
          <SplitButton $side aria-label="Collapse right"><Arrow $dir="right" /></SplitButton>
        </SideSplitter>
        <Summary />
      </Lower>
      <Footer>
        <PanelsButton>Panels<Arrow $dir="down" $color="#222" /></PanelsButton>
        <SubmitButton>Submit</SubmitButton>
      </Footer>
      <Desktop />
    </Screen>
  );
}
